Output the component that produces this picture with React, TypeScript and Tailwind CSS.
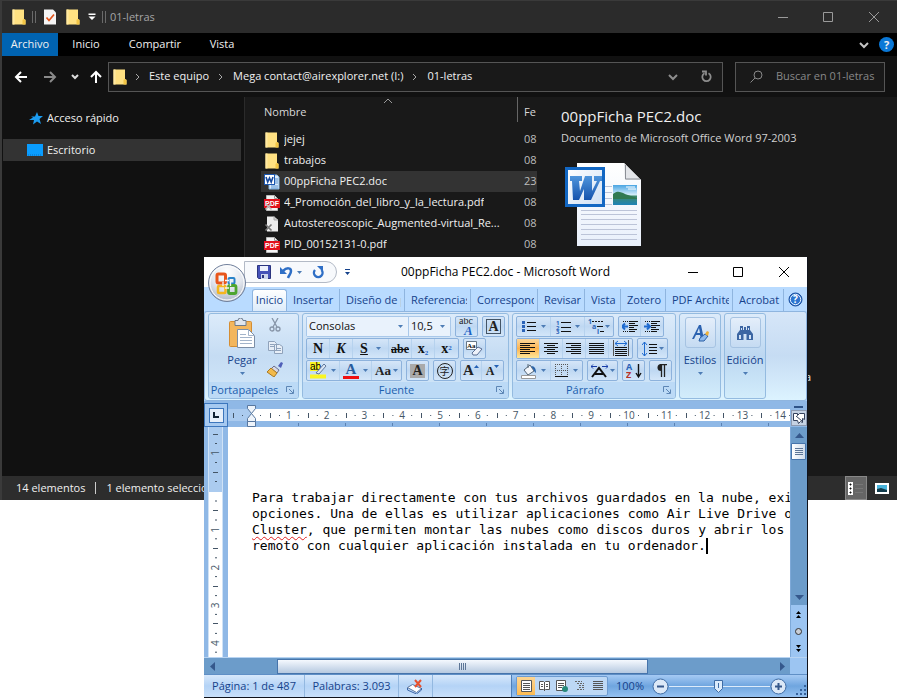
import type { ReactNode } from 'react';

const ui = "font-['Open_Sans','Noto_Sans',sans-serif]";

/* ---------- Shared drawings ---------- */

function Folder() {
  return (
    <svg className="shrink-0" width="14" height="16" viewBox="0 0 14 16" aria-hidden="true">
      <path d="M0.500 0.500H12V10l1.500 1v4.500H0.500z" fill="#ffe182" />
      <path d="M0.500 0.500H2.500V15.500H0.500z" fill="#ffe9a2" />
      <path d="M10.500 11c0-1 3-1 3 0v4.500h-3z" fill="#f3c545" />
    </svg>
  );
}

function Caret({ className = 'text-[#4d7cb5]' }: { className?: string }) {
  return (
    <svg className={`shrink-0 ${className}`} width="5" height="3" viewBox="0 0 5 3" aria-hidden="true">
      <path d="M0 0h5L2.500 3z" fill="currentColor" />
    </svg>
  );
}

function Chevron({ dir = 'right', className = '' }: { dir?: 'right' | 'down' | 'up'; className?: string }) {
  const d = dir === 'right' ? 'M3 2l3 3-3 3' : dir === 'down' ? 'M1 3l4 4 4-4' : 'M1 7l4-4 4 4';
  return (
    <svg className={`shrink-0 ${className}`} width="10" height="10" viewBox="0 0 10 10" fill="none" stroke="currentColor" aria-hidden="true">
      <path d={d} />
    </svg>
  );
}

/* ---------- File explorer ---------- */

function WordSmall() {
  return (
    <svg width="16" height="16" viewBox="0 0 16 16" aria-hidden="true">
      <path d="M5 1h8l2 2v12H5z" fill="#dcebfa" stroke="#86b4df" />
      <path d="M11 5h3M11 7h3M11 9h3M7 12h7M7 14h7" stroke="#5b93cf" />
      <rect x="0.500" y="0.500" width="10" height="10" fill="#fff" stroke="#1c57b0" />
      <path d="M2 3l1.700 5 1.800-4 1.700 4 1.800-5" fill="none" stroke="#164a9e" strokeWidth="1.600" />
    </svg>
  );
}

function PdfIcon({ offline = false }: { offline?: boolean }) {
  return (
    <svg width="16" height="16" viewBox="0 0 16 16" aria-hidden="true">
      <path d="M2.500 0.500h8l3 3v12h-11z" fill="#f4f4f4" stroke="#bbb" />
      <path d="M10.500 0.500v3h3" fill="none" stroke="#999" />
      <rect x="0" y="4" width="16" height="9" fill="#e2111b" />
      <text x="8" y="11" textAnchor="middle" fontSize="7" fontWeight="700" fill="#fff" fontFamily="Liberation Sans, sans-serif">PDF</text>
      {offline && <path d="M1.500 8.500l6 6M7.500 8.500l-6 6" stroke="#bdbdbd" strokeWidth="1.700" />}
    </svg>
  );
}

function OfflineFile() {
  return (
    <svg width="16" height="16" viewBox="0 0 16 16" aria-hidden="true">
      <path d="M3 0.500h7l4 3.500v11.500H3z" fill="#ededed" />
      <path d="M10 0.500v3.500h4" fill="#cfcfcf" stroke="#aaa" />
      <path d="M1.500 8.500l6 6M7.500 8.500l-6 6" stroke="#777" strokeWidth="1.700" />
    </svg>
  );
}

const files: { name: string; date: string; icon: ReactNode; selected?: boolean }[] = [
  { name: 'jejej', date: '08', icon: <Folder /> },
  { name: 'trabajos', date: '08', icon: <Folder /> },
  { name: '00ppFicha PEC2.doc', date: '23', icon: <WordSmall />, selected: true },
  { name: '4_Promoción_del_libro_y_la_lectura.pdf', date: '08', icon: <PdfIcon offline /> },
  { name: 'Autostereoscopic_Augmented-virtual_Re...', date: '08', icon: <OfflineFile /> },
  { name: 'PID_00152131-0.pdf', date: '08', icon: <PdfIcon /> },
];

function WordDocument() {
  return (
    <svg width="84" height="84" viewBox="0 0 84 84" aria-hidden="true">
      <defs>
        <linearGradient id="sheet" x1="0" y1="0" x2="0" y2="1">
          <stop offset="0" stopColor="#fff" />
          <stop offset="1" stopColor="#e9f0fb" />
        </linearGradient>
        <linearGradient id="badge" x1="0" y1="0" x2="1" y2="1">
          <stop offset="0" stopColor="#fff" />
          <stop offset="1" stopColor="#cfe0f5" />
        </linearGradient>
        <linearGradient id="photo" x1="0" y1="0" x2="0" y2="1">
          <stop offset="0" stopColor="#4aa5e3" />
          <stop offset="0.500" stopColor="#d6eefa" />
          <stop offset="0.550" stopColor="#3e8a6a" />
          <stop offset="1" stopColor="#1d83b8" />
        </linearGradient>
        <linearGradient id="letter" x1="0" y1="0" x2="0" y2="1">
          <stop offset="0" stopColor="#4f95dc" />
          <stop offset="1" stopColor="#1553ad" />
        </linearGradient>
      </defs>
      <path d="M16 0h47l17 17v66H16z" fill="url(#sheet)" />
      <path d="M63 0l17 17H64z" fill="#e3e5e9" />
      <path d="M64.500 2v14H79" fill="none" stroke="#8b8f96" />
      <path d="M20 23.500h31M20 29.500h31M20 35.500h31M20 41.500h31M20 47.500h56M20 51.500h56M20 56.500h56M20 61.500h56M20 66.500h56M20 71.500h56M20 76.500h56" stroke="#bcc4d8" />
      <rect x="52" y="22" width="24" height="20" fill="url(#photo)" />
      <path d="M52 31c6-5 10 0 15 1l9 3v1H52z" fill="#317a52" />
      <path d="M65 24h9M67 26h8" stroke="#fff" />
      <rect x="5.500" y="5.500" width="37" height="37" fill="url(#badge)" stroke="#1267c3" strokeWidth="3" />
      <path d="M9 13h12v5h-3l1 10 5-15h7v15l5-10h-3v-5h8v5h-2l-9 19h-7v-11l-5 11h-6L11 18H9z" fill="url(#letter)" />
    </svg>
  );
}

function Explorer() {
  return (
    <section className={`flex flex-col border-t border-l-2 border-[#3a3a3a] bg-[#191919] text-[11px] text-[#f0f0f0] ${ui}`}>
      <header className="flex h-8 items-center justify-between bg-[#2b2b2b] pl-[10px]">
        <div className="flex items-center">
          <Folder />
          <span className="ml-[6px] h-3 w-1 border-x border-[#6a6a6a]" />
          <button aria-label="Propiedades" className="ml-[6px]">
            <svg width="16" height="16" viewBox="0 0 16 16">
              <path d="M2 0.500h9l3 3v12H2z" fill="#f5f5f5" />
              <path d="M4.500 8.500l2.500 3 5-6" fill="none" stroke="#e2541b" strokeWidth="1.700" />
            </svg>
          </button>
          <button aria-label="Nueva carpeta" className="ml-2"><Folder /></button>
          <button aria-label="Personalizar" className="ml-2">
            <svg width="8" height="8" viewBox="0 0 8 8"><path d="M0.500 0.500h7v1.500h-7zM0.500 3.500h7L4 7z" fill="#fff" /></svg>
          </button>
          <span className="ml-[6px] h-3 w-1 border-x border-[#6a6a6a]" />
          <h1 className="ml-1 text-[#a5a5a5]">01-letras</h1>
        </div>
        <div className="flex text-[#9a9a9a]">
          <button aria-label="Minimizar" className="grid h-8 w-[45px] place-items-center"><svg width="10" height="10" stroke="currentColor"><path d="M0 5.500h10" /></svg></button>
          <button aria-label="Maximizar" className="grid h-8 w-[45px] place-items-center"><svg width="10" height="10" fill="none" stroke="currentColor"><path d="M0.500 0.500h9v9h-9z" /></svg></button>
          <button aria-label="Cerrar" className="grid h-8 w-[47px] place-items-center"><svg width="10" height="10" stroke="currentColor"><path d="M0 0l10 10M10 0L0 10" /></svg></button>
        </div>
      </header>

      <nav className="flex h-[23px] items-center bg-black">
        <button className="h-full w-14 bg-[#0063b1]">Archivo</button>
        <button className="h-full w-14">Inicio</button>
        <button className="h-full w-[82px]">Compartir</button>
        <button className="h-full w-[52px]">Vista</button>
        <div className="ml-auto flex items-center gap-[10px] pr-[3px]">
          <button aria-label="Expandir la cinta"><Chevron dir="down" className="stroke-2 text-[#c4c4c4]" /></button>
          <button aria-label="Ayuda" className="grid size-[15px] place-items-center rounded-full bg-[#0a78d7] text-[11px] leading-none font-bold">?</button>
        </div>
      </nav>

      <div className="flex h-[41px] items-center gap-3 bg-[#111] pr-3 pl-3">
        <div className="flex items-center">
          <button aria-label="Atrás" className="mr-[17px]"><svg width="13" height="12" fill="none" stroke="#fff" strokeWidth="2"><path d="M13 6H2M7 1L2 6l5 5" /></svg></button>
          <button aria-label="Adelante" className="mr-[14px]"><svg width="13" height="12" fill="none" stroke="#8a8a8a" strokeWidth="2"><path d="M0 6h11M6 1l5 5-5 5" /></svg></button>
          <button aria-label="Ubicaciones recientes" className="mr-[11px]"><svg width="8" height="6" fill="none" stroke="#ddd" strokeWidth="2"><path d="M1 1l3 3 3-3" /></svg></button>
          <button aria-label="Subir"><svg width="12" height="13" fill="none" stroke="#fff" strokeWidth="2"><path d="M6 13V2M1 7l5-5 5 5" /></svg></button>
        </div>
        <div className="-ml-[6px] flex h-[30px] min-w-0 flex-1 items-center border border-[#555] bg-[#191919] pr-[9px] pl-1">
          <Folder />
          <Chevron className="mx-[6px] text-[#a8a8a8]" />
          <a href="#equipo" className="whitespace-nowrap">Este equipo</a>
          <Chevron className="mx-[7px] text-[#a8a8a8]" />
          <a href="#mega" className="whitespace-nowrap">Mega contact@airexplorer.net (I:)</a>
          <Chevron className="mx-[7px] text-[#a8a8a8]" />
          <a href="#letras" className="whitespace-nowrap">01-letras</a>
          <button aria-label="Historial" className="mr-[22px] ml-auto"><Chevron dir="down" className="stroke-2 text-[#8d8d8d]" /></button>
          <button aria-label="Actualizar">
            <svg width="13" height="13" viewBox="0 0 13 13" fill="none" stroke="#8d8d8d" strokeWidth="1.800"><path d="M4.500 3.300A4.200 4.200 0 1 0 8.500 3.300M2 1.500h4v4" /></svg>
          </button>
        </div>
        <label className="flex h-[30px] w-[150px] shrink-0 items-center border border-[#555] bg-[#191919] pl-[14px]">
          <svg className="mr-[13px] shrink-0" width="13" height="13" fill="none" stroke="#888"><circle cx="8" cy="5" r="4" /><path d="M5 8L0.500 12.500" /></svg>
          <span className="sr-only">Buscar</span>
          <input placeholder="Buscar en 01-letras" className="w-full min-w-0 bg-transparent outline-none placeholder:text-[#888]" />
        </label>
      </div>

      <div className="flex h-[379px]">
        <aside className="w-[243px] shrink-0 border-r border-[#2b2b2b] bg-[#111] pt-[11px] pr-[3px] pl-px">
          <a href="#rapido" className="flex h-[20px] items-center gap-1 pl-[26px]">
            <svg width="14" height="13" viewBox="0 0 14 13" aria-hidden="true"><path d="M8 0l1.500 4H14l-3.500 3 1.500 5-4-2.500-4 3 1-4.500L0 8l4-2.500-2-1h4z" fill="#1c9cf0" /></svg>
            Acceso rápido
          </a>
          <a href="#escritorio" className="mt-[11px] flex h-[22px] items-center gap-1 bg-[#333] pl-6">
            <svg width="16" height="12" aria-hidden="true"><path d="M0 0h16v12H0z" fill="#0a9dff" /><path d="M1 11h14" stroke="#0671c4" strokeDasharray="1 1" /></svg>
            Escritorio
          </a>
        </aside>
        <table className="ml-4 h-max w-[276px] shrink-0 table-fixed border-separate border-spacing-0">
          <thead>
            <tr className="h-8 text-left text-[#d8d8d8]">
              <th className="relative w-[257px] pb-[2px] pl-[3px] font-normal">
                Nombre
                <Chevron dir="up" className="absolute -top-px left-[122px] text-[#999]" />
                <span className="absolute top-0 right-0 h-[25px] w-px bg-[#666]" />
              </th>
              <th className="pb-[2px] pl-[6px] font-normal">Fe</th>
            </tr>
          </thead>
          <tbody>
            {files.map((f) => (
              <tr key={f.name} className={f.selected ? 'bg-[#333]' : ''}>
                <td className="h-[21px] p-0">
                  <div className="flex items-center gap-1 pl-[3px]">
                    <span className="grid w-4 shrink-0 place-items-center">{f.icon}</span>
                    <span className="truncate">{f.name}</span>
                  </div>
                </td>
                <td className="p-0 pl-[6px] text-[#bdbdbd]">{f.date}</td>
              </tr>
            ))}
          </tbody>
        </table>
        <article className="min-w-0 flex-1 pt-[7px] pl-6">
          <h2 className="text-[15px] leading-6">00ppFicha PEC2.doc</h2>
          <p className="mb-[15px] leading-5 text-[#d0d0d0]">Documento de Microsoft Office Word 97-2003</p>
          <WordDocument />
          <p className="mt-[122px] pl-[244px] leading-4">a</p>
        </article>
      </div>

      <footer className="flex h-6 items-center bg-[#2d2d2d] pl-[14px]">
        <span>14 elementos</span>
        <span className="mx-[10px] h-3 w-px bg-[#ccc]" />
        <span>1 elemento seleccionado</span>
        <div className="ml-auto flex gap-1 pr-1">
          <button aria-label="Detalles" className="grid h-6 w-[22px] place-items-center border border-[#888] bg-[#666]">
            <svg width="16" height="13"><path d="M0 0h5v13H0z" fill="#fff" /><path d="M2 2h1v1H2zM2 6h1v1H2zM2 10h1v1H2z" fill="#111" stroke="#111" /><path d="M7 2.500h8M7 6.500h8M7 10.500h8" stroke="#777" /></svg>
          </button>
          <button aria-label="Iconos grandes" className="grid h-6 w-[22px] place-items-center">
            <svg width="14" height="11"><path d="M0 0h14v11H0z" fill="#fff" /><path d="M2 2h10v7H2z" fill="#49b4dc" /><path d="M2 6l4-1 6 2v2H2z" fill="#123c4c" /></svg>
          </button>
        </div>
      </footer>
    </section>
  );
}

/* ---------- Word: ribbon pieces ---------- */

function Tool({ label, w = 'w-[23px]', active = false, children }: { label: string; w?: string; active?: boolean; children: ReactNode }) {
  return (
    <button
      aria-label={label}
      className={`flex h-[19px] items-center justify-center gap-1 ${w} ${active ? 'bg-linear-to-b from-[#fbd79b] via-[#fdb44f] to-[#fde79a]' : ''}`}
    >
      {children}
    </button>
  );
}

function Cluster({ children }: { children: ReactNode }) {
  return (
    <div className="flex shrink-0 divide-x divide-[#b6d2ee] rounded-[2px] border border-[#8db2dc] bg-linear-to-b from-[#d5e6f8] via-[#bfd8f2] to-[#d3e6f9]">
      {children}
    </div>
  );
}

function Launcher() {
  return (
    <svg width="8" height="8" viewBox="0 0 8 8" fill="none" stroke="#5d86b5"><path d="M0.500 6V0.500H6M3 3l4 4M7.500 3.500v4h-4" /></svg>
  );
}

function Group({ title, w, children }: { title: string; w: string; children: ReactNode }) {
  return (
    <section className={`flex h-[86px] shrink-0 flex-col rounded-[3px] border border-[#94bbe0] bg-linear-to-b from-[#dcebfa] via-[#c5dcf3] to-[#d2e8fa] ${w}`}>
      <div className="h-[68px]">{children}</div>
      <div className="relative flex h-4 items-center justify-center rounded-b-[2px] bg-[#bcdaf6] pr-[18px] text-[#1b5fae]">
        <h3>{title}</h3>
        <button aria-label={`Cuadro de diálogo ${title}`} className="absolute right-1"><Launcher /></button>
      </div>
    </section>
  );
}

function Lines({ rows, width = 16 }: { rows: [number, number][]; width?: number }) {
  return (
    <svg width={width} height="14" stroke="#111" aria-hidden="true">
      {rows.map(([a, b], i) => <path key={i} d={`M${a} ${i * 2 + 1.5}H${b}`} />)}
    </svg>
  );
}

const left: [number, number][] = [[0, 15], [0, 10], [0, 15], [0, 10], [0, 15], [0, 10]];
const center: [number, number][] = [[0, 14], [3, 11], [0, 14], [3, 11], [0, 14], [3, 11]];
const right: [number, number][] = [[0, 15], [5, 15], [0, 15], [5, 15], [0, 15], [5, 15]];
const full: [number, number][] = [[0, 15], [0, 15], [0, 15], [0, 15], [0, 15], [0, 15]];

const serif = "font-['Liberation_Serif',serif]";

function Clipboard() {
  return (
    <Group title="Portapapeles" w="w-[91px]">
      <div className="flex h-full">
        <button className="flex w-[66px] flex-col items-center pt-1 text-[#15428b]">
          <svg width="28" height="30" viewBox="0 0 28 30" aria-hidden="true">
            <rect x="1.500" y="3.500" width="22" height="25" rx="1" fill="#f3b65d" stroke="#d58d32" />
            <path d="M7 2.500h3a2.500 2.500 0 0 1 5 0h3v5H7z" fill="#dfe5ee" stroke="#6c7a8d" />
            <path d="M9.500 11.500h11l6 6v12h-17z" fill="#fff" stroke="#7c8ea6" />
            <path d="M20.500 11.500v6h6M12 16.500h6M12 19.500h12M12 22.500h12M12 25.500h12" fill="none" stroke="#a3b4ca" />
          </svg>
          <span className="mt-1 leading-4">Pegar</span>
          <Caret className="mt-1 text-[#4d7cb5]" />
        </button>
        <div className="-ml-2 flex flex-col items-center">
          <button aria-label="Cortar" className="grid h-[22px] place-items-center">
            <svg width="12" height="14" fill="none" stroke="#8795a8" strokeWidth="1.300"><path d="M3 0l5 9M9 0L4 9" /><circle cx="3" cy="11" r="2" /><circle cx="9" cy="11" r="2" /></svg>
          </button>
          <button aria-label="Copiar" className="grid h-[22px] place-items-center">
            <svg width="15" height="13" fill="#e7eef7" stroke="#8fa2bb"><path d="M0.500 0.500h6l2 2v7h-8zM6.500 3.500h5l3 2v7h-8z" /><path d="M2 3.500h4M2 5.500h4M8 7.500h5M8 9.500h5" /></svg>
          </button>
          <button aria-label="Copiar formato" className="grid h-[22px] place-items-center">
            <svg width="16" height="15"><path d="M11 4l3-4 2 1-2 5z" fill="#4f5fb8" /><path d="M7 4l5 4-2 3-6-4z" fill="#d7d9e4" stroke="#6b6f90" /><path d="M4 6l6 5-3 4-7-5z" fill="#f2ba4b" stroke="#a97922" /></svg>
          </button>
        </div>
      </div>
    </Group>
  );
}

function FontGroup() {
  const combo = 'h-[19px] appearance-none bg-[#e9f2fc] pl-[2px] text-[#111] outline-none';
  return (
    <Group title="Fuente" w="w-[207px]">
      <div className="flex flex-col gap-px px-[3px] pt-[2px]">
        <div className="flex items-center gap-1">
          <div className="flex divide-x divide-[#a9c8ea] rounded-[2px] border border-[#a9c8ea]">
            <label className="relative flex items-center">
              <span className="sr-only">Fuente</span>
              <select className={`w-[101px] ${combo}`}><option>Consolas</option></select>
              <Caret className="absolute right-[5px] text-[#4d7cb5]" />
            </label>
            <label className="relative flex items-center">
              <span className="sr-only">Tamaño de fuente</span>
              <select className={`w-[41px] ${combo}`}><option>10,5</option></select>
              <Caret className="absolute right-[5px] text-[#4d7cb5]" />
            </label>
          </div>
          <Cluster>
            <Tool label="Guía fonética" w="w-[21px]">
              <svg width="18" height="18" fontFamily="Liberation Serif, serif">
                <text x="1" y="6" fontSize="10" fill="#222">abc</text>
                <text x="6" y="17" fontSize="13" fontWeight="700" fontStyle="italic" fill="#1d62c4">A</text>
              </svg>
            </Tool>
          </Cluster>
          <Cluster>
            <Tool label="Borde de carácter" w="w-[21px]">
              <span className={`grid size-[15px] place-items-center border border-[#456] text-[14px] leading-none font-bold text-[#222] ${serif}`}>A</span>
            </Tool>
          </Cluster>
        </div>
        <div className={`flex items-center gap-1 text-[14px] font-bold text-[#111] ${serif}`}>
          <Cluster>
            <Tool label="Negrita">N</Tool>
            <Tool label="Cursiva"><i>K</i></Tool>
            <Tool label="Subrayado" w="w-[36px]"><u>S</u><Caret className="ml-1 text-[#4d7cb5]" /></Tool>
            <Tool label="Tachado"><s className="text-[12px]">abe</s></Tool>
            <Tool label="Subíndice"><span>x<sub className="text-[7px] text-[#1d62c4]">2</sub></span></Tool>
            <Tool label="Superíndice"><span>x<sup className="text-[7px] text-[#1d62c4]">2</sup></span></Tool>
          </Cluster>
          <Cluster>
            <Tool label="Borrar formato" w="w-[21px]">
              <svg width="17" height="16"><path d="M0.500 0.500h10v8h-10z" fill="#fff" stroke="#678" /><text x="1" y="7" fontSize="7" fill="#111">Aa</text><path d="M6 12l6-6 4 2-5 6H7z" fill="#eef2fa" stroke="#5b6f94" /></svg>
            </Tool>
          </Cluster>
        </div>
        <div className={`flex items-center gap-1 text-[14px] font-bold text-[#222] ${serif}`}>
          <Cluster>
            <Tool label="Resaltado" w="w-[33px]">
              <svg width="17" height="17"><path d="M0 0h10v9H0zM0 12.500h16v4H0z" fill="#f9f523" /><text x="0" y="8" fontSize="10" fontWeight="400" fontFamily="Liberation Sans, sans-serif">ab</text><path d="M6 11l8-9 2 2-7 8z" fill="#dbe6f4" stroke="#61799c" /></svg>
              <Caret />
            </Tool>
            <Tool label="Color de fuente" w="w-[32px]">
              <span className="border-b-[3px] border-[#f01010] px-[3px] text-[15px] leading-[13px] text-[#285c9e]">A</span>
              <Caret />
            </Tool>
            <Tool label="Cambiar mayúsculas" w="w-[29px]">
              <span className="text-[13px]">Aa</span>
              <Caret className="-ml-[2px] text-[#4d7cb5]" />
            </Tool>
          </Cluster>
          <Cluster><Tool label="Sombreado de carácter" w="w-[21px]"><span className="bg-[#aaa] px-[2px] leading-[14px]">A</span></Tool></Cluster>
          <Cluster>
            <Tool label="Encerrar caracteres" w="w-[21px]">
              <span className="grid size-4 place-items-center rounded-full border border-[#222] font-['Noto_Sans_CJK_JP',sans-serif] text-[10px] leading-none font-normal">字</span>
            </Tool>
          </Cluster>
          <Cluster>
            <Tool label="Agrandar fuente" w="w-[21px]"><span className="text-[15px]">A</span><Caret className="mb-2 -ml-1 rotate-180 text-[#2360b5]" /></Tool>
            <Tool label="Encoger fuente" w="w-[21px]"><span className="text-[12px]">A</span><Caret className="mb-2 -ml-1 text-[#2360b5]" /></Tool>
          </Cluster>
        </div>
      </div>
    </Group>
  );
}

function ParagraphGroup() {
  return (
    <Group title="Párrafo" w="w-[164px]">
      <div className="flex flex-col gap-px px-[3px] pt-[2px]">
        <div className="flex gap-1">
          <Cluster>
            <Tool label="Viñetas" w="w-[34px]">
              <svg width="15" height="13"><path d="M0 1h3v3H0zM0 5h3v3H0zM0 9h3v3H0z" fill="#2a63b8" /><path d="M5 2.500h9M5 6.500h9M5 10.500h9" stroke="#111" /></svg><Caret />
            </Tool>
            <Tool label="Numeración" w="w-[34px]">
              <svg width="15" height="14" fontSize="6" fontWeight="700" fill="#2a63b8"><text x="0" y="5">1</text><text x="0" y="10">2</text><text x="0" y="14">3</text><path d="M5 2.500h10M5 7.500h10M5 11.500h10" stroke="#111" /></svg><Caret />
            </Tool>
            <Tool label="Lista multinivel" w="w-[28px]">
              <svg width="17" height="15" fontSize="7" fontWeight="700" fill="#2a63b8"><text x="0" y="5">1</text><text x="4" y="10">a</text><text x="9" y="15">i</text><path d="M4 2.500h11" stroke="#111" strokeDasharray="2 1" /><path d="M9 7.500h6M12 12.500h4" stroke="#111" /></svg><Caret className="-ml-1 text-[#4d7cb5]" />
            </Tool>
          </Cluster>
          <Cluster>
            {[['Disminuir sangría', 'M6 6.500H0M3 3.500l-3 3 3 3'], ['Aumentar sangría', 'M0 6.500h6M3 3.500l3 3-3 3']].map(([l, d]) => (
              <Tool key={l} label={l} w="w-[22px]">
                <svg width="16" height="14" fill="none"><path d="M1 1.500h5M1 11.500h5" stroke="#111" strokeDasharray="1 1" /><path d="M7 1.500h9M7 3.500h6M7 5.500h9M7 7.500h5M7 9.500h8M7 11.500h6" stroke="#111" /><path d={d} stroke="#1f6bd0" strokeWidth="2" /></svg>
              </Tool>
            ))}
          </Cluster>
        </div>
        <div className="flex gap-1">
          <Cluster>
            <Tool label="Alinear a la izquierda" active><Lines rows={left} /></Tool>
            <Tool label="Centrar"><Lines rows={center} width={14} /></Tool>
            <Tool label="Alinear a la derecha"><Lines rows={right} /></Tool>
            <Tool label="Justificar"><Lines rows={full} /></Tool>
            <Tool label="Distribuido">
              <svg width="16" height="17" fill="none" stroke="#111"><path d="M0.500 0v16M15.500 0v16" stroke="#555" /><path d="M2 3.500h12M5 1L2 3.500 5 6M11 1l3 2.500L11 6" stroke="#1f6bd0" /><path d="M2 7.500h12M2 9.500h12M2 11.500h12M2 13.500h12M2 15.500h12" /></svg>
            </Tool>
          </Cluster>
          <Cluster>
            <Tool label="Interlineado" w="w-[29px]">
              <svg width="15" height="16" fill="none"><path d="M2.500 1v14M0 4l2.500-3L5 4M0 12l2.500 3L5 12" stroke="#1f6bd0" /><path d="M7 3.500h8M7 6.500h8M7 9.500h8M7 12.500h8" stroke="#111" /></svg><Caret className="-ml-[2px] text-[#4d7cb5]" />
            </Tool>
          </Cluster>
        </div>
        <div className="flex gap-1">
          <Cluster>
            <Tool label="Sombreado" w="w-[34px]">
              <svg width="16" height="16"><path d="M3 7l6-5 4 6-6 4z" fill="#f3f6fb" stroke="#567" /><path d="M7 5V1" stroke="#567" /><path d="M10 3c4 0 5 3 5 7-2-1-2-3-3-4z" fill="#2a63a8" /><path d="M0.500 12.500h14v3H0.500z" fill="#fff" stroke="#999" /></svg><Caret />
            </Tool>
            <Tool label="Bordes" w="w-[31px]">
              <svg width="14" height="14" fill="none"><path d="M0.500 0v13M12.500 0v13M6.500 0v13M0 0.500h13M0 6.500h13" stroke="#555" strokeDasharray="1 1" /><path d="M0 12.500h13" stroke="#111" /></svg><Caret />
            </Tool>
          </Cluster>
          <Cluster>
            <Tool label="Diseño asiático" w="w-[29px]">
              <svg width="17" height="14" fill="none"><path d="M1 13l7-9 7 9M4 10h8" stroke="#111" strokeWidth="2" /><path d="M0 2.500h6M11 2.500h6M2 0.500l-2 2 2 2M15 0.500l2 2-2 2" stroke="#173ca8" /></svg><Caret className="-ml-[2px] text-[#4d7cb5]" />
            </Tool>
          </Cluster>
          <Cluster>
            <Tool label="Ordenar" w="w-[21px]">
              <svg width="16" height="17" fontWeight="700" fontSize="9"><text x="0" y="8" fill="#2a63b8">A</text><text x="0" y="16" fill="#b8332a">Z</text><path d="M12.500 2v12M10 11l2.500 4 2.500-4" fill="none" stroke="#111" strokeWidth="1.400" /></svg>
            </Tool>
          </Cluster>
          <Cluster>
            <Tool label="Mostrar todo" w="w-[21px]">
              <svg width="12" height="13"><path d="M5 0.500h7M6.500 0v13M9.500 0v13" stroke="#222" strokeWidth="1.300" /><path d="M6 0a3.500 3.500 0 0 0 0 7z" fill="#222" /></svg>
            </Tool>
          </Cluster>
        </div>
      </div>
    </Group>
  );
}

function TallButton({ title, w, children }: { title: string; w: string; children: ReactNode }) {
  return (
    <button className={`flex h-[86px] shrink-0 flex-col items-center rounded-[3px] border border-[#94bbe0] bg-linear-to-b from-[#dcebfa] via-[#bcd7f1] to-[#d2ecfb] pt-[3px] text-[#15428b] ${w}`}>
      <span className="grid h-[31px] w-[31px] place-items-center rounded-[3px] border border-[#a6c3e2] bg-linear-to-b from-[#e4eefa] to-[#c5dbf2]">{children}</span>
      <span className="mt-1 leading-4">{title}</span>
      <Caret className="mt-1 text-[#4d7cb5]" />
    </button>
  );
}

/* ---------- Word: rulers ---------- */

const unit = 37.8;
const hMarks = Array.from({ length: 15 }, (_, i) => i);

function HorizontalRuler() {
  return (
    <svg className="block h-[23px] w-full" fontSize="10" fill="#456" fontFamily="Open Sans, sans-serif" aria-hidden="true">
      <rect width="100%" height="23" fill="#8fb8e6" />
      <rect y="5" width="24" height="12" fill="#abcbef" />
      <rect x="24" y="5" width="100%" height="12" fill="#fff" />
      <path d="M5.500 9v5M14 11.500h1" stroke="#456" />
      {hMarks.map((n) => {
        const x = 23 + n * unit;
        return (
          <g key={n}>
            {n > 0 && <text x={x} y="15" textAnchor="middle">{n}</text>}
            <path d={`M${x + 9} 11.500h1M${x + 28} 11.500h1`} stroke="#456" />
            <path d={`M${Math.round(x + 18.9) + 0.5} 9v5`} stroke="#456" />
          </g>
        );
      })}
      {hMarks.map((n) => <path key={n} d={`M${70.5 + n * 47} 19v3`} stroke="#5c83b4" />)}
      <path d="M19.500 1.500h8v3l-4 5 4 5v3h-8v-3l4-5-4-5zM19.500 17.500h8v5h-8z" fill="#eef4fb" stroke="#58779f" />
    </svg>
  );
}

function VerticalRuler() {
  return (
    <svg className="block h-full w-6 shrink-0" fontSize="10" fill="#456" fontFamily="Open Sans, sans-serif" aria-hidden="true">
      <rect width="24" height="100%" fill="#8fb8e6" />
      <rect x="5" width="13" height="65" fill="#abcbef" />
      <rect x="5" y="65" width="13" height="100%" fill="#fff" />
      <path d="M4.500 0v240M18.500 0v240" stroke="#cfe2f6" />
      <path d="M9 7.500h5M9 45.500h5M11 16.500h2M11 35.500h2M11 54.500h2" stroke="#456" />
      <text transform="translate(15 26) rotate(-90)" textAnchor="middle">1</text>
      {[0, 1, 2, 3, 4].map((n) => {
        const y = 65 + n * unit;
        return (
          <g key={n}>
            {n > 0 && <text transform={`translate(15 ${y}) rotate(-90)`} textAnchor="middle">{n}</text>}
            <path d={`M11 ${y + 9}h2M11 ${y + 28}h2M9 ${Math.round(y + 18) + 0.5}h5`} stroke="#456" />
          </g>
        );
      })}
    </svg>
  );
}

/* ---------- Word window ---------- */

const tabs = [
  { name: 'Insertar', w: 'w-[53px]' },
  { name: 'Diseño de página', w: 'w-[65px]' },
  { name: 'Referencias', w: 'w-[66px]' },
  { name: 'Correspondencia', w: 'w-[67px]' },
  { name: 'Revisar', w: 'w-[47px]' },
  { name: 'Vista', w: 'w-[36px]' },
  { name: 'Zotero', w: 'w-[45px]' },
  { name: 'PDF Architect', w: 'w-[67px]' },
  { name: 'Acrobat', w: 'w-[51px]' },
];

function OfficeButton() {
  return (
    <button aria-label="Botón de Office" className="absolute top-[6px] left-[3px] z-10">
      <svg width="40" height="40" viewBox="0 0 40 40">
        <defs>
          <radialGradient id="orb" cx="0.500" cy="0.200" r="0.900">
            <stop offset="0" stopColor="#fff" />
            <stop offset="0.500" stopColor="#e2e6ee" />
            <stop offset="1" stopColor="#a3acbc" />
          </radialGradient>
        </defs>
        <circle cx="20" cy="20" r="18.500" fill="url(#orb)" stroke="#71809c" />
        <circle cx="20" cy="20" r="17" fill="none" stroke="#fff" />
        <g fill="none">
          <rect x="10" y="11" width="8.500" height="9" rx="1.500" stroke="#e8561c" strokeWidth="3" />
          <rect x="21.500" y="15" width="6" height="5.500" rx="1" stroke="#2a83c9" strokeWidth="2" />
          <rect x="11" y="23" width="7.500" height="7" rx="1" stroke="#f5b51c" strokeWidth="2.500" />
          <rect x="21.500" y="22.500" width="7.500" height="8" rx="1.500" stroke="#4ea52f" strokeWidth="2.800" />
        </g>
        <path d="M18 17.500h4M18 25h4M16 19v4M23.500 19v4" stroke="#f4f6fa" strokeWidth="1.300" />
      </svg>
    </button>
  );
}

function WordTitle() {
  return (
    <header className="grid h-[30px] grid-cols-[1fr_auto_1fr] items-center bg-white">
      <div className="ml-10 flex items-center">
        <div className="flex h-[22px] w-[93px] items-center rounded-r-full border border-[#b3bac6] bg-[#f7f9fc] pl-3">
          <button aria-label="Guardar">
            <svg width="14" height="14" viewBox="0 0 14 14"><path d="M0.500 0.500h13v13H1.500l-1-1z" fill="#4552b8" stroke="#2b357f" /><path d="M3 1h8v5H3z" fill="#eef2fd" /><path d="M4 9h7v5H4z" fill="#cdd5ec" /><path d="M5 10h2v3H5z" fill="#2b357f" /></svg>
          </button>
          <button aria-label="Deshacer" className="ml-[9px] flex items-center gap-1">
            <svg width="13" height="13" viewBox="0 0 13 13" fill="none"><path d="M3 5c4-4 8-3 8 0s-2 4-3 7" stroke="#2f6fc6" strokeWidth="2.500" /><path d="M0 1v7h7z" fill="#2f6fc6" /></svg>
            <Caret />
          </button>
          <button aria-label="Rehacer" className="ml-[10px]">
            <svg width="13" height="13" viewBox="0 0 13 13" fill="none"><path d="M9.500 4a4.300 4.300 0 1 1-6.500 0" stroke="#2f6fc6" strokeWidth="2.400" /><path d="M5 0h6v6z" fill="#2f6fc6" /></svg>
          </button>
        </div>
        <button aria-label="Personalizar barra" className="ml-2">
          <svg width="5" height="7"><path d="M0 0h5v1H0zM0 3h5L2.500 6z" fill="#15428b" /></svg>
        </button>
      </div>
      <h2 className="text-xs text-black">00ppFicha PEC2.doc - Microsoft Word</h2>
      <div className="flex justify-end text-black">
        <button aria-label="Minimizar Word" className="grid h-[30px] w-[45px] place-items-center"><svg width="10" height="10" stroke="currentColor"><path d="M0 5.500h10" /></svg></button>
        <button aria-label="Maximizar Word" className="grid h-[30px] w-[46px] place-items-center"><svg width="10" height="10" fill="none" stroke="currentColor"><path d="M0.500 0.500h9v9h-9z" /></svg></button>
        <button aria-label="Cerrar Word" className="grid h-[30px] w-[46px] place-items-center"><svg width="10" height="10" stroke="currentColor"><path d="M0 0l10 10M10 0L0 10" /></svg></button>
      </div>
    </header>
  );
}

function VerticalScroll() {
  return (
    <div className="flex w-[17px] shrink-0 flex-col border-l border-[#7ea9d8] bg-[#6c9cca]">
      <button aria-label="Desplazar arriba" className="grid h-4 place-items-center text-[#35588c]"><svg width="9" height="5"><path d="M0 5h9L4.500 0z" fill="currentColor" /></svg></button>
      <div className="flex-1">
        <div className="mr-px grid h-[17px] place-items-center rounded-[1px] border border-[#4674ab] bg-linear-to-r from-white to-[#cfdcec]">
          <svg width="8" height="8" stroke="#5d7697"><path d="M0 0.500h8M0 2.500h8M0 4.500h8M0 6.500h8" /></svg>
        </div>
      </div>
      <button aria-label="Desplazar abajo" className="grid h-4 place-items-center text-[#35588c]"><svg width="9" height="5"><path d="M0 0h9L4.500 5z" fill="currentColor" /></svg></button>
      <div className="flex flex-col bg-[#9cc5f2] pr-[2px] text-black">
        <button aria-label="Página anterior" className="grid h-[18px] place-items-center"><svg width="5" height="7"><path d="M0 3h5L2.500 0zM0 7h5L2.500 4z" fill="currentColor" /></svg></button>
        <button aria-label="Objeto de búsqueda" className="grid h-4 place-items-center"><svg width="7" height="7"><circle cx="3.500" cy="3.500" r="3" fill="#c9ced6" stroke="#333" /></svg></button>
        <button aria-label="Página siguiente" className="grid h-[18px] place-items-center"><svg width="5" height="7"><path d="M0 0h5L2.500 3zM0 4h5L2.500 7z" fill="currentColor" /></svg></button>
      </div>
    </div>
  );
}

function StatusBar() {
  return (
    <footer className="flex h-[23px] items-stretch border-t border-[#5f8fc6] bg-linear-to-b from-[#d7e8fb] via-[#b4d3f6] to-[#c9e0fa] text-[#15428b]">
      <button className="w-[101px] border-r border-[#93b8e0]">Página: 1 de 487</button>
      <button className="w-[94px] border-r border-[#93b8e0]">Palabras: 3.093</button>
      <button aria-label="Errores de revisión" className="grid w-[34px] place-items-center border-r border-[#93b8e0]">
        <svg width="17" height="15"><path d="M0.500 8.500l5-3 9 4-5 4z" fill="#fff" stroke="#5c76a0" /><path d="M0.500 9v2l9 4 5-4v-2" fill="none" stroke="#3b66a9" /><path d="M8 1l6 7M14 1L8 8" stroke="#e8512e" strokeWidth="2" /></svg>
      </button>
      <div className="min-w-0 flex-1 border-r border-[#4f7fb8]" />
      <div className="flex items-center bg-linear-to-b from-[#a5caf4] via-[#6fa5df] to-[#95c1f0] pl-1">
        <div className="flex rounded-[2px] border border-[#6d9bd0] bg-[#bdd8f5]">
          <button aria-label="Diseño de impresión" className="grid h-[18px] w-[18px] place-items-center bg-linear-to-b from-[#fcd593] to-[#fdbb50]"><svg width="11" height="12" fill="#fff" stroke="#555"><path d="M0.500 0.500h10v11H0.500zM2 3.500h7M2 5.500h7M2 7.500h7M2 9.500h7" /></svg></button>
          <button aria-label="Lectura" className="grid h-[18px] w-[18px] place-items-center"><svg width="11" height="11" fill="#fff" stroke="#555"><path d="M0.500 0.500h4l1 1 1-1h4v8h-4l-1 1-1-1h-4zM5.500 1v9M2 3.500h2M2 5.500h2M7 3.500h2M7 5.500h2" /></svg></button>
          <button aria-label="Diseño web" className="grid h-[18px] w-[18px] place-items-center"><svg width="12" height="12"><path d="M0.500 0.500h9v10h-9zM2 3.500h6M2 5.500h6M2 7.500h4" fill="#fff" stroke="#555" /><circle cx="9" cy="9" r="3" fill="#278a7c" /></svg></button>
          <button aria-label="Esquema" className="grid h-[18px] w-[18px] place-items-center"><svg width="10" height="10" stroke="#666"><path d="M0 0.500h7M2 2.500h7M4 4.500h6M4 6.500h6M2 8.500h7" strokeDasharray="2 1" /></svg></button>
          <button aria-label="Borrador" className="grid h-[18px] w-[18px] place-items-center"><svg width="10" height="10" stroke="#555"><path d="M0 0.500h10M0 2.500h10M0 4.500h10M0 6.500h10M0 8.500h10" /></svg></button>
        </div>
        <button className="w-11">100%</button>
        <button aria-label="Alejar"><svg width="17" height="17"><circle cx="8.500" cy="8.500" r="7.500" fill="#dbe8f7" stroke="#3f6ca5" /><path d="M5 8.500h7" stroke="#35578a" strokeWidth="2" /></svg></button>
        <div className="relative flex h-4 w-[101px] items-center">
          <div className="h-px w-full bg-[#dcebfb]" />
          <input type="range" aria-label="Zoom" min="10" max="190" defaultValue="100" className="absolute inset-0 w-full opacity-0" />
          <svg className="pointer-events-none absolute left-[45px]" width="9" height="13"><path d="M0.500 0.500h8v8l-4 4-4-4z" fill="#dcebfb" stroke="#3f6ca5" /><path d="M4.500 3v5" stroke="#3f6ca5" /></svg>
        </div>
        <button aria-label="Acercar"><svg width="17" height="17"><circle cx="8.500" cy="8.500" r="7.500" fill="#dbe8f7" stroke="#3f6ca5" /><path d="M5 8.500h7M8.500 5v7" stroke="#35578a" strokeWidth="2" /></svg></button>
        <svg className="mt-2 ml-2" width="12" height="11" fill="#35619b"><path d="M9 0h2v2H9zM9 4h2v2H9zM9 8h2v2H9zM5 4h2v2H5zM5 8h2v2H5zM1 8h2v2H1z" /></svg>
      </div>
    </footer>
  );
}

function WordWindow() {
  return (
    <section className={`absolute top-[257px] right-[89px] left-[204px] overflow-hidden border-r border-b border-[#10131c] bg-[#a9cffa] text-[11px] ${ui}`}>
      <OfficeButton />
      <WordTitle />
      <nav className="flex h-6 items-end bg-[#b9dbff] pl-12 text-[#15428b]">
        <button className="h-[22px] w-[35px] shrink-0 rounded-t-[3px] border border-b-0 border-[#8fb5df] bg-linear-to-b from-white to-[#dcebfa]">Inicio</button>
        {tabs.map((t) => (
          <button key={t.name} className={`h-[22px] shrink-0 border-r border-[#8fb5df] pr-[3px] pl-[6px] ${t.w}`}>
            <span className="block overflow-hidden text-left whitespace-nowrap">{t.name}</span>
          </button>
        ))}
        <button aria-label="Ayuda de Word" className="mb-1 ml-1">
          <svg width="15" height="15"><circle cx="7.500" cy="7.500" r="6.500" fill="#2c74cf" stroke="#1b4f9e" /><circle cx="7.500" cy="7.500" r="5.200" fill="none" stroke="#e6f0fc" /><text x="7.500" y="11" textAnchor="middle" fontSize="10" fontWeight="700" fill="#fff">?</text></svg>
        </button>
      </nav>
      <div className="flex h-[90px] gap-[3px] rounded-[3px] border border-[#8fb5df] bg-linear-to-b from-[#d6e6f8] via-[#c6dcf3] to-[#dcf3ff] pt-px pl-[3px]">
        <Clipboard />
        <FontGroup />
        <ParagraphGroup />
        <TallButton title="Estilos" w="w-[42px]">
          <svg width="18" height="18"><path d="M1 15L8 1h2l3 14h-3l-1-4H5l-2 4zM6 9h3L8 4z" fill="#2b62b0" /><path d="M9 14l5-4 3 2-4 5H8z" fill="#8db9ec" stroke="#2a5ea5" /><path d="M14 10l2-3 2 1-1 4z" fill="#f0b135" /></svg>
        </TallButton>
        <TallButton title="Edición" w="w-[42px]">
          <svg width="16" height="14" fill="#3c66a3"><path d="M3 0h3v4h1V1h2v3h1V0h3v4l3 4v6H9.500V8h-3v6H0V8l3-4z" /><path d="M2 9h2v4H2zM12 9h2v4h-2zM4 2h1v2H4zM11 2h1v2h-1z" fill="#d3e3f6" /></svg>
        </TallButton>
      </div>
      <div className="flex h-[26px] items-end bg-[#8fb8e6]">
        <button aria-label="Tipo de tabulación" className="grid size-6 shrink-0 place-items-center border border-[#3c76bd] bg-[#a6c9f0]">
          <span className="grid size-[15px] place-items-center border border-[#3c76bd] bg-[#e6effa]"><svg width="6" height="6"><path d="M1 0v5h5" fill="none" stroke="#123" strokeWidth="2" /></svg></span>
        </button>
        <div className="min-w-0 flex-1"><HorizontalRuler /></div>
        <div className="flex w-[17px] shrink-0 flex-col items-center gap-[2px] pb-px">
          <span className="h-[2px] w-[9px] bg-[#2e5388]" />
          <button aria-label="Regla" className="grid size-4 place-items-center border border-[#8d9ab0] bg-[#c5d2e3]">
            <svg width="12" height="12" fill="#fff" stroke="#33415c"><path d="M0.500 1.500h4v2l2-2h5v6l-2-1v4l-2-1-2 2-1-3h-4z" /><path d="M3 4l6 5" /></svg>
          </button>
        </div>
      </div>
      <div className="flex h-[230px]">
        <VerticalRuler />
        <div className="min-w-0 flex-1 overflow-hidden bg-white pt-[63px] pl-6">
          <p className="font-['DejaVu_Sans_Mono',monospace] text-[13px] leading-4 whitespace-nowrap text-black">
            Para trabajar directamente con tus archivos guardados en la nube, exis<br />
            opciones. Una de ellas es utilizar aplicaciones como Air Live Drive o<br />
            <span className="underline decoration-[#e02020] decoration-wavy decoration-1 underline-offset-2">Cluster</span>, que permiten montar las nubes como discos duros y abrir los a<br />
            remoto con cualquier aplicación instalada en tu ordenador.<span className="inline-block h-4 w-[2px] bg-black align-top" />
          </p>
        </div>
        <VerticalScroll />
      </div>
      <div className="flex h-[17px] border-t border-[#b8d4f2] bg-[#9cc5f2] pr-[17px]">
        <div className="flex flex-1 items-center bg-[#6c9cca]">
          <button aria-label="Desplazar a la izquierda" className="grid w-4 place-items-center"><svg width="5" height="9"><path d="M5 0v9L0 4.500z" fill="#35588c" /></svg></button>
          <div className="flex flex-1 pr-[126px] pl-[57px]">
            <div className="grid h-[15px] flex-1 place-items-center border border-[#4674ab] bg-linear-to-b from-[#f5f9fe] to-[#b6c9e0]">
              <svg width="8" height="7" stroke="#5d7697"><path d="M0.500 0v7M2.500 0v7M4.500 0v7M6.500 0v7" /></svg>
            </div>
          </div>
          <button aria-label="Desplazar a la derecha" className="grid w-4 place-items-center"><svg width="5" height="9"><path d="M0 0v9l5-4.500z" fill="#35588c" /></svg></button>
        </div>
      </div>
      <StatusBar />
    </section>
  );
}

export default function App() {
  return (
    <main className="relative min-h-screen overflow-hidden bg-white">
      <Explorer />
      <WordWindow />
    </main>
  );
}
